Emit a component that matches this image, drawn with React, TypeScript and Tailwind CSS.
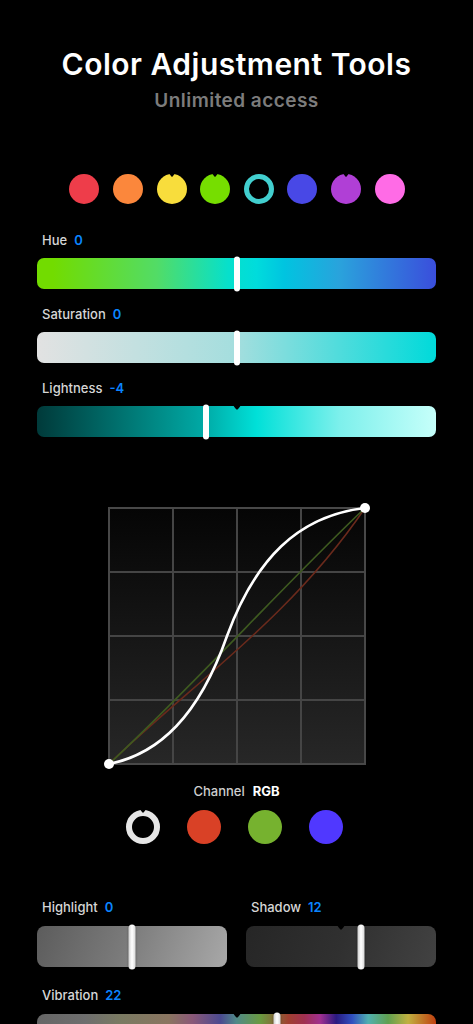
import React from "react";

const Notch = ({ left, w = 7, h = 4 }: { left: string; w?: number; h?: number }) => (
  <svg
    className="absolute top-0 -translate-x-1/2"
    style={{ left }}
    width={w}
    height={h}
    viewBox="0 0 8 5"
    preserveAspectRatio="none"
  >
    <path d="M0 0 H8 L5 4 Q4 5 3 4 Z" fill="#000" />
  </svg>
);

const Thumb = ({ left, tall, soft }: { left: string; tall: number; soft?: boolean }) => (
  <div
    className={
      soft
        ? "absolute top-1/2 -translate-x-1/2 -translate-y-1/2 w-[7px] rounded-full bg-[linear-gradient(to_right,#cfcfcf,#ffffff_50%,#d8d8d8)] shadow-[0_0_2px_rgba(0,0,0,0.5)]"
        : "absolute top-1/2 -translate-x-1/2 -translate-y-1/2 w-[6px] rounded-full bg-white"
    }
    style={{ left, height: tall }}
  />
);

const Label = ({ name, value }: { name: string; value: string }) => (
  <div className="pl-[5px] h-4 flex items-center gap-[7px] text-[13px] leading-4">
    <span className="text-[#d6d6d6] font-medium">{name}</span>
    <span className="text-[#0a84ff] font-semibold">{value}</span>
  </div>
);

const Dot = ({ color, notch }: { color: string; notch?: boolean }) => (
  <div className="relative w-[30px] h-[30px] rounded-full" style={{ background: color }}>
    {notch && <Notch left="50%" w={5} h={3} />}
  </div>
);

export default function App() {
  const dots: { c: string; n?: boolean }[] = [
    { c: "#ee3d4a" },
    { c: "#fb873c" },
    { c: "#f8dd3c", n: true },
    { c: "#76de00", n: true },
  ];
  const dots2: { c: string; n?: boolean }[] = [
    { c: "#4848e6" },
    { c: "#b03fd6", n: true },
    { c: "#ff6be6" },
  ];
  return (
    <div
      className="w-full h-[1024px] overflow-hidden bg-black flex flex-col"
      style={{ fontFamily: "Inter, 'Noto Sans', sans-serif" }}
    >
      <div className="pt-[46px] flex flex-col items-center">
        <div className="h-9 text-[30px] leading-9 font-semibold text-white tracking-[0.5px]">
          Color Adjustment Tools
        </div>
        <div className="mt-[7px] h-6 text-[19px] leading-6 font-semibold text-[#7c7c7c] tracking-[0.45px]">
          Unlimited access
        </div>
      </div>

      <div className="mt-[61px] flex justify-center gap-[13.6px] pl-[1px]">
        {dots.map((d, i) => (
          <Dot key={i} color={d.c} notch={d.n} />
        ))}
        <div className="w-[30px] h-[30px] rounded-full border-[5px] border-[#42cfcf]" />
        {dots2.map((d, i) => (
          <Dot key={i} color={d.c} notch={d.n} />
        ))}
      </div>

      <div className="px-[37px] flex flex-col">
        <div className="mt-[28px]">
          <Label name="Hue" value="0" />
        </div>
        <div className="relative mt-[10px] h-[31px] rounded-[7px] bg-[linear-gradient(to_right,#72dc00_0%,#72dc00_4%,#52dc66_30%,#06e0cc_48%,#00dcdc_55%,#00c4e0_62%,#2aa2dc_76%,#3a4edc_100%)]">
          <Thumb left="50%" tall={35} />
        </div>

        <div className="mt-[17px]">
          <Label name="Saturation" value="0" />
        </div>
        <div className="relative mt-[10px] h-[31px] rounded-[7px] bg-[linear-gradient(to_right,#e2e2e2_0%,#a4dede_50%,#00dada_100%)]">
          <Thumb left="50%" tall={35} />
        </div>

        <div className="mt-[17px]">
          <Label name="Lightness" value="-4" />
        </div>
        <div className="relative mt-[10px] h-[31px] rounded-[7px] bg-[linear-gradient(to_right,#003a3a_0%,#008a86_30%,#00aaa6_42%,#00e0d8_55%,#7ef0ec_76%,#c6fffa_100%)]">
          <Notch left="50%" />
          <Thumb left="42.4%" tall={35} />
        </div>
      </div>

      <div className="mt-[66px] flex justify-center">
        <svg width="266" height="266" viewBox="-5 -5 266 266">
          <defs>
            <linearGradient id="bg" x1="0" y1="0" x2="0" y2="1">
              <stop offset="0" stopColor="#050505" />
              <stop offset="1" stopColor="#272727" />
            </linearGradient>
          </defs>
          <rect x="0" y="0" width="256" height="256" fill="url(#bg)" />
          {[64, 128, 192].map((p) => (
            <g key={p}>
              <line x1={p} y1="0" x2={p} y2="256" stroke="#454545" strokeWidth="2" />
              <line x1="0" y1={p} x2="256" y2={p} stroke="#454545" strokeWidth="2" />
            </g>
          ))}
          <rect x="0" y="0" width="256" height="256" fill="none" stroke="#484848" strokeWidth="2" />
          <path d="M0 256 C80 178 180 112 256 0" fill="none" stroke="#6a2a1c" strokeWidth="1.6" />
          <path d="M0 256 C90 172 168 84 256 0" fill="none" stroke="#3e5a20" strokeWidth="1.6" />
          <path
            d="M0 256 C50 246 90 208 118 128 C146 52 188 8 256 0"
            fill="none"
            stroke="#ffffff"
            strokeWidth="2.6"
          />
          <circle cx="0" cy="256" r="5" fill="#fff" />
          <circle cx="256" cy="0" r="5" fill="#fff" />
        </svg>
      </div>

      <div className="mt-[14px] h-4 flex justify-center items-center gap-[8px] text-[13px] leading-4">
        <span className="text-[#cfcfcf] font-medium">Channel</span>
        <span className="text-white font-bold">RGB</span>
      </div>

      <div className="mt-[11px] flex justify-center gap-[27px] pr-[5px]">
        <div className="relative w-[34px] h-[34px] rounded-full border-[6px] border-[#e6e6e6]">
          <svg className="absolute -top-[6px] left-1/2 -translate-x-1/2" width="5" height="3" viewBox="0 0 6 4" preserveAspectRatio="none">
            <path d="M0 0 H6 L4 3 Q3 4 2 3 Z" fill="#000" />
          </svg>
        </div>
        <div className="w-[34px] h-[34px] rounded-full bg-[#d94126]" />
        <div className="w-[34px] h-[34px] rounded-full bg-[#76b22f]" />
        <div className="w-[34px] h-[34px] rounded-full bg-[#5038ff]" />
      </div>

      <div className="mt-[55px] px-[37px] grid grid-cols-2 gap-x-[19px]">
        <div className="flex flex-col">
          <Label name="Highlight" value="0" />
          <div className="relative mt-[11px] h-[41px] rounded-[8px] bg-[linear-gradient(110deg,#5c5c5c_0%,#7a7a7a_45%,#a8a8a8_100%)]">
            <Thumb left="50%" tall={45} soft />
          </div>
        </div>
        <div className="flex flex-col">
          <Label name="Shadow" value="12" />
          <div className="relative mt-[11px] h-[41px] rounded-[8px] bg-[linear-gradient(110deg,#262626_0%,#303030_50%,#424242_100%)]">
            <Notch left="50%" />
            <Thumb left="60.5%" tall={45} soft />
          </div>
        </div>
      </div>

      <div className="px-[37px] flex flex-col">
        <div className="mt-[20px]">
          <Label name="Vibration" value="22" />
        </div>
        <div className="relative mt-[11px] h-[41px] shrink-0 rounded-[8px] bg-[linear-gradient(to_right,#666666_0%,#6e6e6e_12%,#7a7a62_21%,#8a7560_33%,#8a5878_39%,#4b4a90_46%,#508a88_50%,#6a9a40_56%,#a04030_63%,#a03050_67%,#a03090_71%,#2a1a80_75%,#3050c0_79%,#50b0b0_83%,#60a050_88%,#c0b040_93%,#c04010_100%)]">
          <Notch left="50%" />
          <Thumb left="60.2%" tall={45} soft />
        </div>
      </div>
    </div>
  );
}
